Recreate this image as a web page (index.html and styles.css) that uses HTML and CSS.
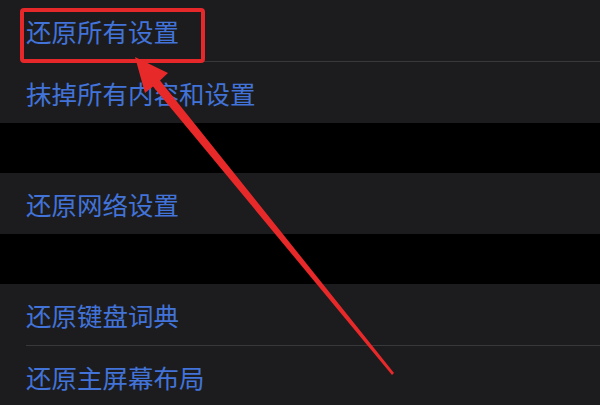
FILE: index.html
```html
<!DOCTYPE html>
<html lang="zh-CN">
<head>
<meta charset="utf-8">
<title>还原</title>
<link rel="stylesheet" href="styles.css">
</head>
<body>
<div class="screen">
  <div class="group">
    <div class="row">还原所有设置</div>
    <div class="row">抹掉所有内容和设置</div>
  </div>
  <div class="group">
    <div class="row">还原网络设置</div>
  </div>
  <div class="group">
    <div class="row">还原键盘词典</div>
    <div class="row">还原主屏幕布局</div>
  </div>
  <div class="highlight"></div>
  <svg class="arrow" width="600" height="405" viewBox="0 0 600 405">
    <polygon fill="#e8292a" points="135,57 168,73 160,80.5 394,373 392,375 153,86.5 145,93"/>
  </svg>
</div>
</body>
</html>
```

FILE: styles.css
```css
html, body {
  margin: 0;
  padding: 0;
  background: #000;
}
.screen {
  position: relative;
  width: 600px;
  height: 405px;
  overflow: hidden;
  display: flex;
  flex-direction: column;
  gap: 50px;
  font-family: "Noto Sans CJK SC", "Noto Sans", sans-serif;
}
.group {
  background: #1c1c1e;
  display: flex;
  flex-direction: column;
}
.row {
  position: relative;
  height: 61px;
  display: flex;
  align-items: center;
  padding-left: 26px;
  font-size: 25.5px;
  color: #4273d8;
  white-space: nowrap;
}
.row + .row {
  border-top: 1px solid transparent;
}
.row + .row::before {
  content: "";
  position: absolute;
  left: 26px;
  right: 0;
  top: -1px;
  height: 1px;
  background: #38383b;
}
.highlight {
  position: absolute;
  left: 20px;
  top: 8px;
  width: 177px;
  height: 47px;
  border: 4px solid #e6282a;
  border-radius: 4px;
}
.arrow {
  position: absolute;
  left: 0;
  top: 0;
}
```
